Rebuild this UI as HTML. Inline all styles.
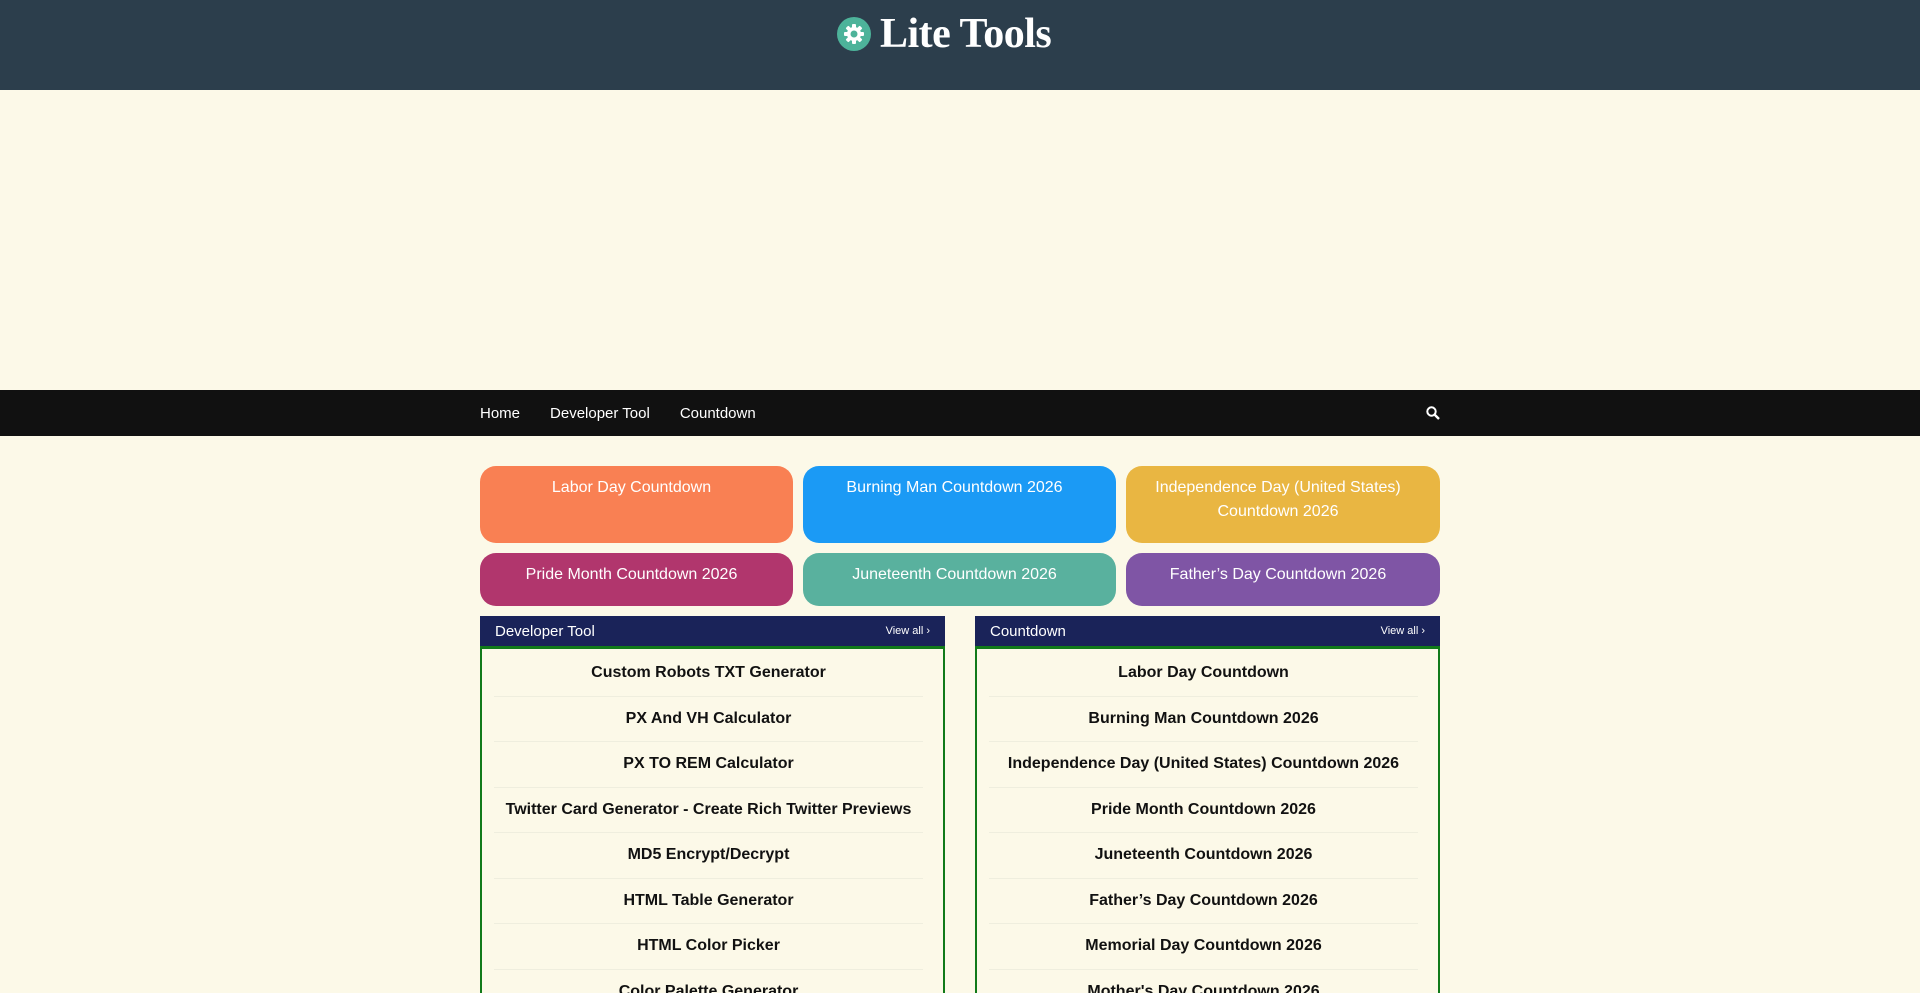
<!DOCTYPE html>
<html><head><meta charset="utf-8"><style>
*{box-sizing:border-box;margin:0;padding:0}
html,body{width:1920px;height:993px;overflow:hidden}
body{background:#fcf9e8;font-family:"Liberation Sans",Arial,sans-serif;position:relative}
.hdr{height:90px;background:#2c3e4c;position:relative}
.logo{position:absolute;left:837px;top:10px;display:flex;align-items:center}
.logo .t{color:#fff;font-family:"Liberation Serif",serif;font-weight:bold;font-size:42px;margin-left:9px;letter-spacing:-0.5px}
.nav{position:absolute;top:390px;left:0;width:1920px;height:46px;background:#111}
.nav .in{width:960px;margin:0 auto;display:flex;align-items:center;height:46px;color:#fff;font-size:15px;position:relative}
.nav span{margin-right:30px}
.cards{position:absolute;top:466px;left:480px;width:960px;display:grid;grid-template-columns:313px 313px 314px;column-gap:10px;row-gap:10px}
.c{border-radius:16px;color:#fff;font-size:16px;text-align:center;padding:10px 30px 0 20px;line-height:24px}
.r1{height:77px}.r2{height:53px}
.box{position:absolute;top:616px;width:465px;height:377px;overflow:hidden}
.bh{height:30px;background:#1a2359;color:#fff;font-size:15px;padding:0 15px;display:flex;justify-content:space-between;align-items:center}
.bh small{font-size:11px}
.bb{border:2px solid #117a1a;border-top-width:3px;border-bottom:none;height:360px;padding:2px 20px 0 12px}
.it{height:45.5px;border-bottom:1px solid #efeede;display:flex;align-items:center;justify-content:center;font-weight:bold;font-size:16px;color:#111}
</style></head><body>
<div class="hdr"><div class="logo">
<svg width="34" height="34" viewBox="0 0 34 34"><circle cx="17" cy="17" r="17" fill="#4db39a"/><g fill="#fff"><circle cx="17" cy="17" r="7"/><rect x="15" y="7" width="4" height="20" rx="1"/><rect x="7" y="15" width="20" height="4" rx="1"/><rect x="15" y="7" width="4" height="20" rx="1" transform="rotate(45 17 17)"/><rect x="15" y="7" width="4" height="20" rx="1" transform="rotate(-45 17 17)"/></g><circle cx="17" cy="17" r="3.5" fill="#4db39a"/></svg>
<span class="t">Lite Tools</span></div></div>
<div class="nav"><div class="in"><span>Home</span><span>Developer Tool</span><span>Countdown</span>
<svg style="position:absolute;right:0px;top:16px" width="14" height="14" viewBox="0 0 14 14"><circle cx="5.5" cy="5.5" r="4.2" stroke="#fff" stroke-width="2" fill="none"/><line x1="8.6" y1="8.6" x2="13" y2="13" stroke="#fff" stroke-width="2.4"/></svg></div></div>
<div class="cards">
<div class="c r1" style="background:#f98053">Labor Day Countdown</div>
<div class="c r1" style="background:#1b9af5">Burning Man Countdown 2026</div>
<div class="c r1" style="background:#e9b642">Independence Day (United States) Countdown 2026</div>
<div class="c r2" style="background:#b1366d">Pride Month Countdown 2026</div>
<div class="c r2" style="background:#59b19e">Juneteenth Countdown 2026</div>
<div class="c r2" style="background:#7f55a5">Father’s Day Countdown 2026</div>
</div>
<div class="box" style="left:480px"><div class="bh"><span>Developer Tool</span><small>View all ›</small></div><div class="bb">
<div class="it">Custom Robots TXT Generator</div><div class="it">PX And VH Calculator</div><div class="it">PX TO REM Calculator</div><div class="it">Twitter Card Generator - Create Rich Twitter Previews</div><div class="it">MD5 Encrypt/Decrypt</div><div class="it">HTML Table Generator</div><div class="it">HTML Color Picker</div><div class="it">Color Palette Generator</div></div></div>
<div class="box" style="left:975px"><div class="bh"><span>Countdown</span><small>View all ›</small></div><div class="bb">
<div class="it">Labor Day Countdown</div><div class="it">Burning Man Countdown 2026</div><div class="it">Independence Day (United States) Countdown 2026</div><div class="it">Pride Month Countdown 2026</div><div class="it">Juneteenth Countdown 2026</div><div class="it">Father’s Day Countdown 2026</div><div class="it">Memorial Day Countdown 2026</div><div class="it">Mother's Day Countdown 2026</div></div></div>
</body></html>
